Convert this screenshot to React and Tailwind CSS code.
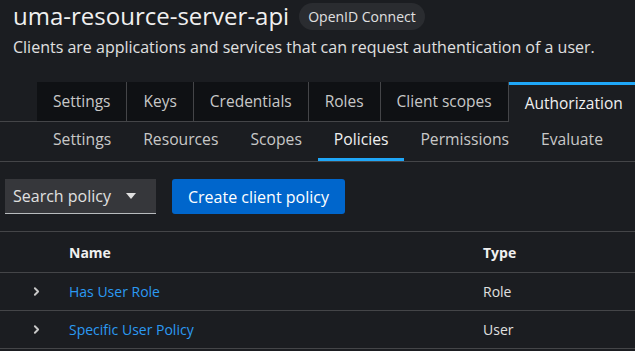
import { ChevronRight } from "lucide-react";

const tabs = ["Settings", "Keys", "Credentials", "Roles", "Client scopes"];
const subTabs = ["Settings", "Resources", "Scopes", "Policies", "Permissions", "Evaluate", "Export"];
const rows = [
  { name: "Has User Role", type: "Role" },
  { name: "Specific User Policy", type: "User" },
];

export default function App() {
  return (
    <div className="w-[635px] h-[351px] overflow-hidden bg-[#1b1d21] text-[#e0e0e0] font-['Open_Sans',sans-serif]">
      {/* header */}
      <div className="px-[13px] pt-[0px]">
        <div className="flex items-center gap-[10px]">
          <h1 className="text-[24px] leading-[32px] text-[#f0f0f0]">uma-resource-server-api</h1>
          <span className="rounded-full bg-[#2a2c30] px-[9px] h-[27px] flex items-center text-[14px] text-[#e0e0e0]">
            OpenID Connect
          </span>
        </div>
        <p className="mt-[4px] text-[16px] leading-[22px] text-[#e0e0e0]">
          Clients are applications and services that can request authentication of a user.
        </p>
      </div>

      {/* main tabs */}
      <div className="mt-[24px] flex h-[40px] whitespace-nowrap text-[15.5px]">
        <div className="w-[37px] shrink-0 border-b border-[#444548]" />
        {tabs.map((t) => (
          <div
            key={t}
            className="shrink-0 flex items-center px-[16px] bg-[#0f1114] border-r border-[#444548] border-b text-[#c8c8c8]"
          >
            {t}
          </div>
        ))}
        <div className="shrink-0 flex items-center px-[16px] bg-[#1b1d21] border-t-[3px] border-t-[#1fa7f8] border-r border-[#444548] text-[#f0f0f0]">
          Authorization
        </div>
        <div className="flex-1 border-b border-[#444548]" />
      </div>

      {/* sub tabs */}
      <div className="flex h-[40px] pl-[37px] border-b border-[#444548] whitespace-nowrap text-[15.7px]">
        {subTabs.map((t) => (
          <div
            key={t}
            className={`shrink-0 flex items-center px-[16px] border-b-[3px] ${
              t === "Policies" ? "border-[#1fa7f8] text-[#f0f0f0]" : "border-transparent text-[#c8c8c8]"
            }`}
          >
            {t}
          </div>
        ))}
      </div>

      {/* toolbar */}
      <div className="flex items-center gap-[16px] px-[5px] pt-[17px] pb-[17px] border-b border-[#444548]">
        <div className="w-[151px] h-[35px] bg-[#36373b] border-b border-[#b8bbbe] flex items-center justify-between pl-[8px] pr-[20px] text-[16px] text-[#e0e0e0]">
          <span>Search policy</span>
          <svg width="10" height="6" viewBox="0 0 10 6">
            <path d="M0 0h10L5 6z" fill="#e0e0e0" />
          </svg>
        </div>
        <button className="h-[35px] px-[16px] rounded-[3px] bg-[#0066cc] text-[16px] text-white">
          Create client policy
        </button>
      </div>

      {/* table */}
      <div className="text-[14px]">
        <div className="flex h-[41px] items-center border-b border-[#444548] font-bold text-[#f0f0f0]">
          <div className="w-[69px]" />
          <div className="w-[414px]">Name</div>
          <div>Type</div>
        </div>
        {rows.map((r) => (
          <div key={r.name} className="flex h-[38px] items-center border-b border-[#444548]">
            <div className="w-[69px] pl-[30px]">
              <ChevronRight size={13} strokeWidth={3.5} className="text-[#c8c8c8]" />
            </div>
            <div className="w-[414px] text-[#2b9af3]">{r.name}</div>
            <div className="text-[#e0e0e0]">{r.type}</div>
          </div>
        ))}
      </div>
    </div>
  );
}
